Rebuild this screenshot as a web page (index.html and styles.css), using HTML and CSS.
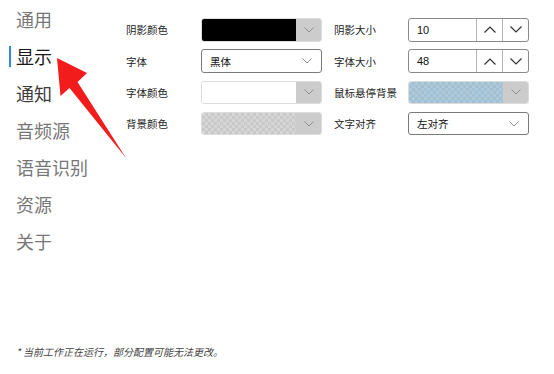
FILE: index.html
```html
<!DOCTYPE html>
<html lang="zh">
<head>
<meta charset="utf-8">
<link rel="stylesheet" href="styles.css">
</head>
<body>
<div class="main">
  <nav class="nav">
    <div class="nav-item"><span class="nav-label">通用</span></div>
    <div class="nav-item active"><span class="nav-label">显示</span></div>
    <div class="nav-item hover"><span class="nav-label">通知</span></div>
    <div class="nav-item"><span class="nav-label">音频源</span></div>
    <div class="nav-item"><span class="nav-label">语音识别</span></div>
    <div class="nav-item"><span class="nav-label">资源</span></div>
    <div class="nav-item"><span class="nav-label">关于</span></div>
  </nav>
  <section class="form">
    <div class="label">阴影颜色</div>
    <div class="color-pick">
      <div class="swatch swatch-black"></div>
      <div class="drop"><svg class="chev" viewBox="0 0 10 6"><path d="M0.5 0.5 L5 5 L9.5 0.5"/></svg></div>
    </div>
    <div class="label label-r">阴影大小</div>
    <div class="spin">
      <div class="spin-value">10</div>
      <div class="spin-btn"><svg class="chev-dark" viewBox="0 0 12 7"><path d="M0.5 6.5 L6 1 L11.5 6.5"/></svg></div>
      <div class="spin-btn"><svg class="chev-dark" viewBox="0 0 12 7"><path d="M0.5 0.5 L6 6 L11.5 0.5"/></svg></div>
    </div>

    <div class="label">字体</div>
    <div class="select">
      <span class="select-text">黑体</span>
      <svg class="chev" viewBox="0 0 10 6"><path d="M0.5 0.5 L5 5 L9.5 0.5"/></svg>
    </div>
    <div class="label label-r">字体大小</div>
    <div class="spin">
      <div class="spin-value">48</div>
      <div class="spin-btn"><svg class="chev-dark" viewBox="0 0 12 7"><path d="M0.5 6.5 L6 1 L11.5 6.5"/></svg></div>
      <div class="spin-btn"><svg class="chev-dark" viewBox="0 0 12 7"><path d="M0.5 0.5 L6 6 L11.5 0.5"/></svg></div>
    </div>

    <div class="label">字体颜色</div>
    <div class="color-pick">
      <div class="swatch swatch-white"></div>
      <div class="drop"><svg class="chev" viewBox="0 0 10 6"><path d="M0.5 0.5 L5 5 L9.5 0.5"/></svg></div>
    </div>
    <div class="label label-r">鼠标悬停背景</div>
    <div class="color-pick">
      <div class="swatch swatch-blue"></div>
      <div class="drop"><svg class="chev" viewBox="0 0 10 6"><path d="M0.5 0.5 L5 5 L9.5 0.5"/></svg></div>
    </div>

    <div class="label">背景颜色</div>
    <div class="color-pick">
      <div class="swatch swatch-grey"></div>
      <div class="drop"><svg class="chev" viewBox="0 0 10 6"><path d="M0.5 0.5 L5 5 L9.5 0.5"/></svg></div>
    </div>
    <div class="label label-r">文字对齐</div>
    <div class="select">
      <span class="select-text">左对齐</span>
      <svg class="chev" viewBox="0 0 10 6"><path d="M0.5 0.5 L5 5 L9.5 0.5"/></svg>
    </div>
  </section>
</div>
<footer class="note">* 当前工作正在运行，部分配置可能无法更改。</footer>
<svg class="arrow" viewBox="0 0 554 374" width="554" height="374">
  <polygon points="57,58 87,73 77.5,82 126,158 69.5,88 60.5,96" fill="#f31c1c"/>
</svg>
</body>
</html>
```
FILE: styles.css
```css
* { box-sizing: border-box; }
html, body { margin: 0; padding: 0; }
body {
  width: 554px;
  height: 374px;
  background: #fff;
  font-family: "Noto Sans CJK SC", "Noto Sans", sans-serif;
  display: flex;
  flex-direction: column;
  overflow: hidden;
}
.main {
  flex: 1;
  display: flex;
}
.nav {
  width: 126px;
  padding: 1px 0 0 9px;
  display: flex;
  flex-direction: column;
}
.nav-item {
  height: 37px;
  display: flex;
  align-items: center;
}
.nav-label {
  display: block;
  border-left: 2px solid transparent;
  padding-left: 5px;
  font-size: 18px;
  line-height: 21px;
  color: #777;
}
.nav-item.active .nav-label {
  border-left-color: #2b8be6;
  color: #1a1a1a;
}
.nav-item.hover .nav-label { color: #3c3c3c; }

.form {
  padding-top: 18px;
  display: grid;
  grid-template-columns: 75px 121px 86px 121px;
  grid-auto-rows: 23.5px;
  row-gap: 7.8px;
  align-content: start;
}
.label {
  font-size: 10.5px;
  color: #222;
  display: flex;
  align-items: center;
  white-space: nowrap;
}
.label-r { padding-left: 12px; }

.color-pick {
  display: flex;
  border: 1px solid #dcdcdc;
  border-radius: 3px;
  overflow: hidden;
}
.swatch { flex: 1; }
.swatch-black { background: #000; }
.swatch-white { background: #fff; }
.swatch-grey {
  background-color: #d6d6d6;
  background-image:
    linear-gradient(45deg, #c9c9c9 25%, transparent 25%, transparent 75%, #c9c9c9 75%),
    linear-gradient(45deg, #c9c9c9 25%, transparent 25%, transparent 75%, #c9c9c9 75%);
  background-size: 6px 6px;
  background-position: 0 0, 3px 3px;
}
.swatch-blue {
  background-color: #adc9da;
  background-image:
    linear-gradient(45deg, #a3c0d3 25%, transparent 25%, transparent 75%, #a3c0d3 75%),
    linear-gradient(45deg, #a3c0d3 25%, transparent 25%, transparent 75%, #a3c0d3 75%);
  background-size: 6px 6px;
  background-position: 0 0, 3px 3px;
}
.drop {
  width: 25px;
  background: #cccccc;
  display: flex;
  align-items: center;
  justify-content: center;
}
.chev {
  width: 10px;
  height: 6px;
  fill: none;
  stroke: #8f8f8f;
  stroke-width: 1;
}
.select {
  display: flex;
  align-items: center;
  justify-content: space-between;
  border: 1px solid #7a7a7a;
  border-radius: 3px;
  padding: 0 9px 0 8px;
  background: #fff;
}
.select-text {
  font-size: 10.5px;
  color: #111;
}
.spin {
  display: flex;
  border: 1px solid #8a8a8a;
  border-radius: 3px;
  overflow: hidden;
  background: #fff;
}
.spin-value {
  flex: 1;
  display: flex;
  align-items: center;
  padding-left: 8px;
  font-family: "Liberation Sans", "Noto Sans", sans-serif;
  font-size: 11px;
  color: #111;
}
.spin-btn {
  width: 26px;
  border-left: 1px solid #b5b5b5;
  display: flex;
  align-items: center;
  justify-content: center;
}
.chev-dark {
  width: 12px;
  height: 7px;
  fill: none;
  stroke: #333;
  stroke-width: 1.2;
}
.note {
  padding: 0 0 15px 16px;
  font-size: 10px;
  line-height: 14px;
  font-style: italic;
  color: #444;
}
.arrow {
  position: absolute;
  left: 0;
  top: 0;
  pointer-events: none;
}
```
